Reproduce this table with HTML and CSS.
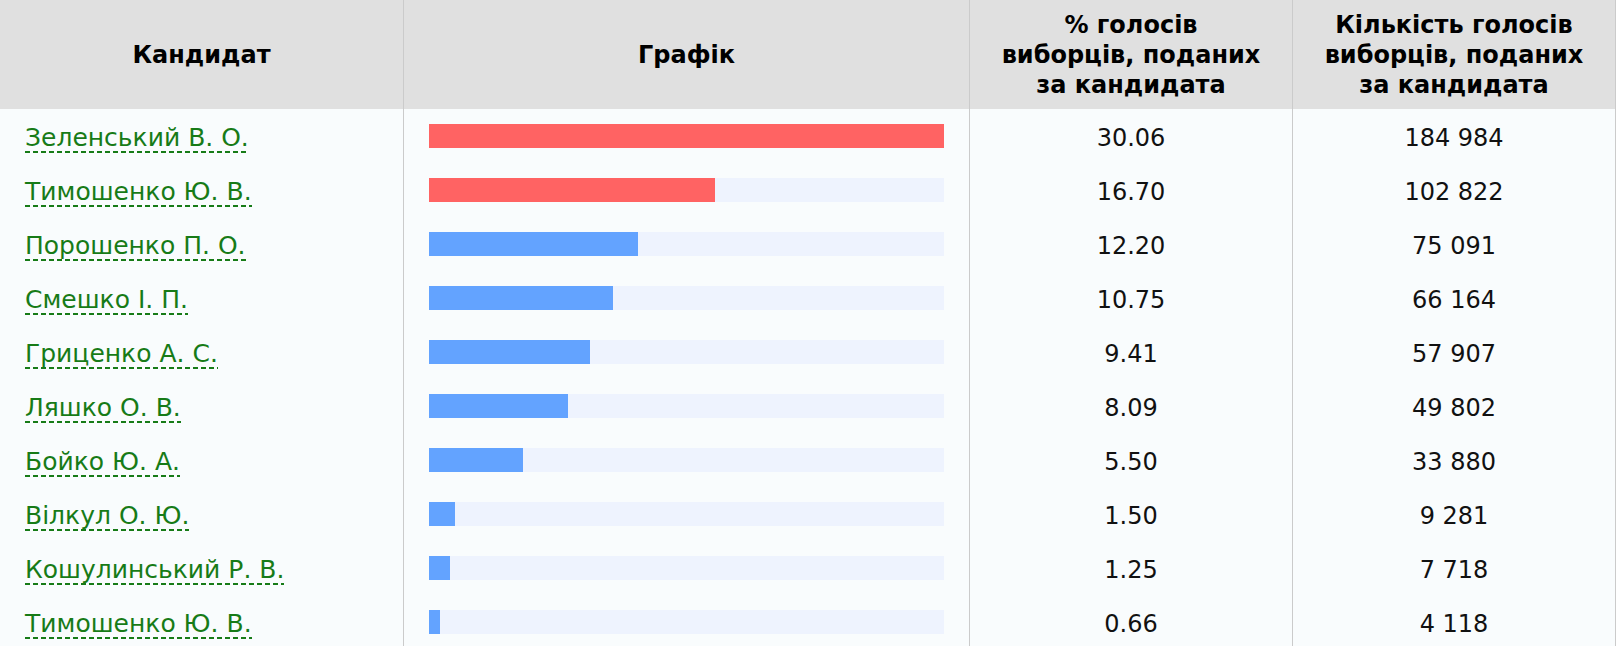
FILE: index.html
```html
<!DOCTYPE html>
<html lang="uk">
<head>
<meta charset="utf-8">
<title>Результати</title>
<link rel="stylesheet" href="styles.css">
</head>
<body>
<div class="results">
  <div class="row head">
    <div class="cell c-name">Кандидат</div>
    <div class="cell c-chart">Графік</div>
    <div class="cell c-pct">% голосів виборців, поданих за кандидата</div>
    <div class="cell c-num">Кількість голосів виборців, поданих за кандидата</div>
  </div>
  <div class="row">
    <div class="cell c-name"><a class="cand" href="#">Зеленський В. О.</a></div>
    <div class="cell c-chart"><div class="track"><div class="bar red" style="width:100%"></div></div></div>
    <div class="cell c-pct">30.06</div>
    <div class="cell c-num">184 984</div>
  </div>
  <div class="row">
    <div class="cell c-name"><a class="cand" href="#">Тимошенко Ю. В.</a></div>
    <div class="cell c-chart"><div class="track"><div class="bar red" style="width:55.56%"></div></div></div>
    <div class="cell c-pct">16.70</div>
    <div class="cell c-num">102 822</div>
  </div>
  <div class="row">
    <div class="cell c-name"><a class="cand" href="#">Порошенко П. О.</a></div>
    <div class="cell c-chart"><div class="track"><div class="bar blue" style="width:40.59%"></div></div></div>
    <div class="cell c-pct">12.20</div>
    <div class="cell c-num">75 091</div>
  </div>
  <div class="row">
    <div class="cell c-name"><a class="cand" href="#">Смешко І. П.</a></div>
    <div class="cell c-chart"><div class="track"><div class="bar blue" style="width:35.76%"></div></div></div>
    <div class="cell c-pct">10.75</div>
    <div class="cell c-num">66 164</div>
  </div>
  <div class="row">
    <div class="cell c-name"><a class="cand" href="#">Гриценко А. С.</a></div>
    <div class="cell c-chart"><div class="track"><div class="bar blue" style="width:31.30%"></div></div></div>
    <div class="cell c-pct">9.41</div>
    <div class="cell c-num">57 907</div>
  </div>
  <div class="row">
    <div class="cell c-name"><a class="cand" href="#">Ляшко О. В.</a></div>
    <div class="cell c-chart"><div class="track"><div class="bar blue" style="width:26.91%"></div></div></div>
    <div class="cell c-pct">8.09</div>
    <div class="cell c-num">49 802</div>
  </div>
  <div class="row">
    <div class="cell c-name"><a class="cand" href="#">Бойко Ю. А.</a></div>
    <div class="cell c-chart"><div class="track"><div class="bar blue" style="width:18.30%"></div></div></div>
    <div class="cell c-pct">5.50</div>
    <div class="cell c-num">33 880</div>
  </div>
  <div class="row">
    <div class="cell c-name"><a class="cand" href="#">Вілкул О. Ю.</a></div>
    <div class="cell c-chart"><div class="track"><div class="bar blue" style="width:4.99%"></div></div></div>
    <div class="cell c-pct">1.50</div>
    <div class="cell c-num">9 281</div>
  </div>
  <div class="row">
    <div class="cell c-name"><a class="cand" href="#">Кошулинський Р. В.</a></div>
    <div class="cell c-chart"><div class="track"><div class="bar blue" style="width:4.16%"></div></div></div>
    <div class="cell c-pct">1.25</div>
    <div class="cell c-num">7 718</div>
  </div>
  <div class="row">
    <div class="cell c-name"><a class="cand" href="#">Тимошенко Ю. В.</a></div>
    <div class="cell c-chart"><div class="track"><div class="bar blue" style="width:2.20%"></div></div></div>
    <div class="cell c-pct">0.66</div>
    <div class="cell c-num">4 118</div>
  </div>
</div>
</body>
</html>
```
FILE: styles.css
```css
html, body {
  margin: 0;
  padding: 0;
  background: #f9fcfd;
}
body {
  font-family: "DejaVu Sans", Verdana, sans-serif;
  font-size: 24px;
  color: #111;
}
.results {
  width: 1616px;
}
.row {
  display: grid;
  grid-template-columns: 403px 566px 323px 324px;
  height: 54px;
}
.row.head {
  height: 109px;
  background: #e0e0e0;
  font-weight: bold;
  color: #000;
}
.cell {
  display: flex;
  align-items: center;
  justify-content: center;
  text-align: center;
  box-sizing: border-box;
  border-left: 1px solid #cbcbcb;
  line-height: 30px;
}
.cell.c-name {
  border-left: none;
}
.cell.c-num {
  border-right: 1px solid #cbcbcb;
}
.head .cell {
  padding: 0 18px;
}
.head .cell.c-pct {
  padding: 0 30px;
}
.row:not(.head) .c-pct,
.row:not(.head) .c-num {
  padding-top: 4px;
}
.row:not(.head) .c-name {
  justify-content: flex-start;
  padding-left: 25px;
}
.c-chart {
  padding: 0 25px;
}
.row:not(.head) .c-chart {
  justify-content: stretch;
}
.track {
  width: 100%;
  height: 24px;
  background: #eef3fe;
}
.bar {
  height: 100%;
}
.bar.red {
  background: #ff6363;
}
.bar.blue {
  background: #63a3ff;
}
.cand {
  display: block;
  color: #177b17;
  font-size: 25px;
  text-decoration: none;
  line-height: 31px;
  padding-top: 3px;
  background-image: linear-gradient(to right, #177b17 0 5px, transparent 5px 8px);
  background-size: 8px 2px;
  background-repeat: repeat-x;
  background-position: 0 100%;
}
```
